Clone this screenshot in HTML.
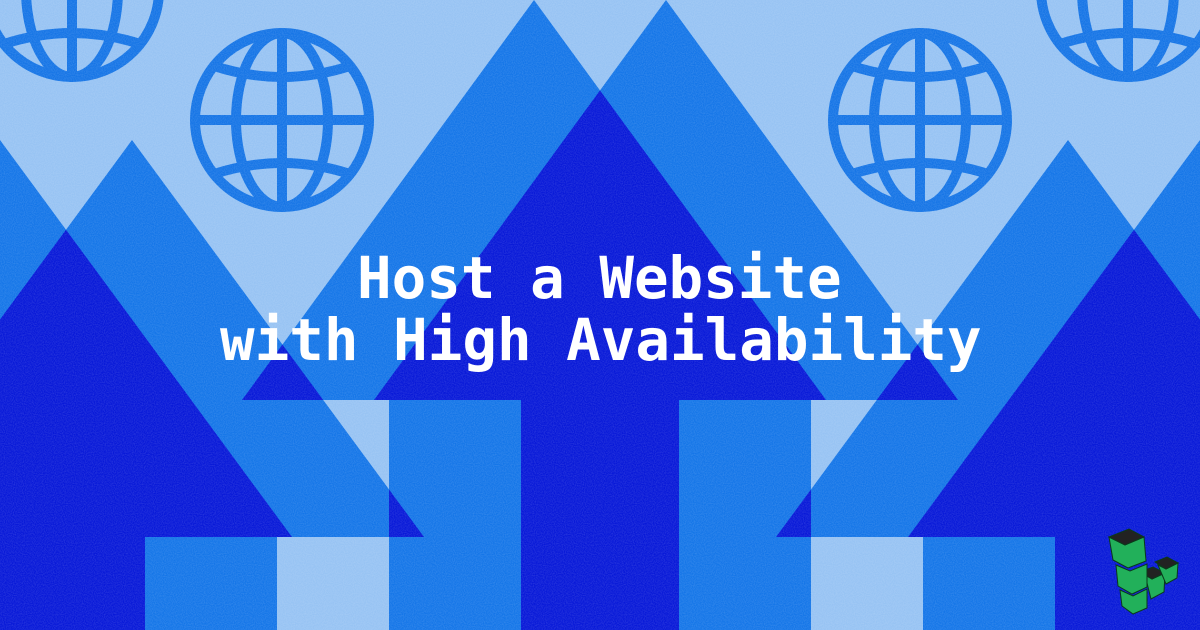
<!DOCTYPE html>
<html><head><meta charset="utf-8"><style>
html,body{margin:0;padding:0;width:1200px;height:630px;overflow:hidden;background:#97c3f3}
svg{display:block}
</style></head><body>
<svg width="1200" height="630" viewBox="0 0 1200 630" xmlns="http://www.w3.org/2000/svg">
<defs>
<filter id="n" x="0" y="0" width="100%" height="100%">
<feTurbulence type="fractalNoise" baseFrequency="0.9" numOctaves="1" seed="3"/>
<feColorMatrix type="matrix" values="0 0 0 0 1  0 0 0 0 1  0 0 0 0 1  0 0 0 0.25 -0.08"/>
</filter>
<polygon id="A" points="534,0 826,400 679,400 679,640 389,640 389,400 242,400"/>
<polygon id="B" points="666,0 958,400 811,400 811,640 521,640 521,400 374,400"/>
<polygon id="C" points="132,140 424,537 277,537 277,640 -13,640 -13,537 -160,537"/>
<polygon id="Cp" points="0,140 292,537 145,537 145,640 -145,640 -145,537 -292,537"/>
<polygon id="D" points="1068,140 1360,537 1213,537 1213,640 923,640 923,537 776,537"/>
<polygon id="Dp" points="1200,140 1492,537 1345,537 1345,640 1055,640 1055,537 908,537"/>
<clipPath id="cA"><use href="#A"/></clipPath>
<clipPath id="cC"><use href="#C"/></clipPath>
<clipPath id="cD"><use href="#D"/></clipPath>
<g id="globe" fill="none" stroke="#1675e6" stroke-width="10">
<circle cx="0" cy="0" r="87"/>
<line x1="0" y1="-88" x2="0" y2="88"/>
<line x1="-88" y1="0" x2="88" y2="0"/>
<ellipse cx="0" cy="0" rx="46" ry="87"/>
<path d="M-68,-54 Q0,-32 68,-54"/>
<path d="M-68,54 Q0,32 68,54"/>
</g>
</defs>
<rect width="1200" height="630" fill="#97c3f3"/>
<use href="#globe" x="72" y="-10"/>
<use href="#globe" x="1128" y="-10"/>
<use href="#globe" x="282" y="120"/>
<use href="#globe" x="920" y="120"/>
<g fill="#1576e8">
<use href="#A"/><use href="#B"/><use href="#C"/><use href="#Cp"/><use href="#D"/><use href="#Dp"/>
</g>
<g fill="#0819d8">
<use href="#B" clip-path="url(#cA)"/>
<use href="#C" clip-path="url(#cA)"/>
<use href="#D" clip-path="url(#cA)"/>
<use href="#Cp" clip-path="url(#cC)"/>
<use href="#Dp" clip-path="url(#cD)"/>
<use href="#B" clip-path="url(#cD)"/>
</g>
<rect width="1200" height="630" filter="url(#n)"/>
<g font-family="'DejaVu Sans Mono', 'Liberation Mono', monospace" font-weight="bold" font-size="57.5" fill="#fff">
<text x="357" y="298">Host a Website</text>
<text x="220" y="360">with High Availability</text>
</g>
<g stroke="#0a3a1a" stroke-width="1">
<polygon points="1120,590 1133,596 1147,589 1147,608 1133,614 1122,606" fill="#22b05a"/>
<polygon points="1145,575 1152,579 1165,573 1164,592 1151,599" fill="#22b05a"/>
<polygon points="1140,572 1153,567 1165,573 1152,579" fill="#222"/>
<polygon points="1158,565 1166,569 1178,563 1177,578 1166,584" fill="#22b05a"/>
<polygon points="1155,562 1167,557 1178,563 1166,569" fill="#222"/>
<polygon points="1116,565 1130,571 1147,564 1147,587 1132,594 1118,586" fill="#22b05a"/>
<polygon points="1109,537 1125,545 1144,537 1146,561 1128,568 1113,560" fill="#22b05a"/>
<polygon points="1109,537 1129,529 1144,537 1125,545" fill="#222"/>
</g>
</svg>
</body></html>
